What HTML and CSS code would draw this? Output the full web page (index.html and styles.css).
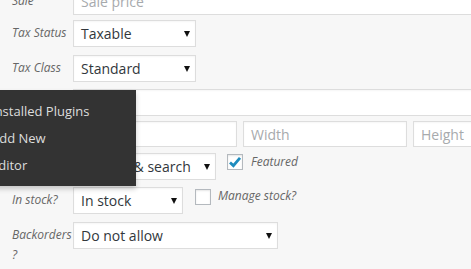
FILE: index.html
```html
<!DOCTYPE html>
<html>
<head>
    <title>Product data</title>
    <link rel="stylesheet" href="styles.css">
</head>
<body>
    <div class="panel">
        <div class="row sp5">
            <label class="field-label">Sale</label>
            <div class="input wide placeholder">Sale price</div>
        </div>
        <div class="row sp8">
            <label class="field-label">Tax Status</label>
            <div class="select tax">Taxable<span class="arrow"></span></div>
        </div>
        <div class="row sp7">
            <label class="field-label">Tax Class</label>
            <div class="select tax">Standard<span class="arrow"></span></div>
        </div>
        <div class="row sp5">
            <label class="field-label">Weight</label>
            <div class="input wide"></div>
        </div>
        <div class="row sp6">
            <label class="field-label">Dimensions</label>
            <div class="dims">
                <div class="input dim placeholder">Length</div>
                <div class="input dim placeholder">Width</div>
                <div class="input dim placeholder">Height</div>
            </div>
        </div>
        <div class="row sp7">
            <label class="field-label">Visibility</label>
            <div class="select visibility">Catalog &amp; search<span class="arrow"></span></div>
            <span class="check checked feat">
                <svg width="14" height="14" viewBox="0 0 14 14"><path d="M2 7.4 L5.4 10.6 L12 2.8" fill="none" stroke="#1e8cbe" stroke-width="2.8"/></svg>
            </span>
            <span class="check-label">Featured</span>
        </div>
        <div class="row sp8">
            <label class="field-label">In stock?</label>
            <div class="select stock">In stock<span class="arrow"></span></div>
            <span class="check manage"></span>
            <span class="check-label">Manage stock?</span>
        </div>
        <div class="row">
            <label class="field-label">Backorders ?</label>
            <div class="select backorders">Do not allow<span class="arrow"></span></div>
        </div>
    </div>

    <!-- flyout submenu from the admin sidebar -->
    <ul class="flyout">
        <li>Installed Plugins</li>
        <li>Add New</li>
        <li>Editor</li>
    </ul>
</body>
</html>
```

FILE: styles.css
```css
html, body {
    margin: 0;
    height: 100%;
    overflow: hidden;
}

body {
    background: #f7f7f7;
    font-family: "Open Sans", "DejaVu Sans", sans-serif;
    color: #32373c;
    position: relative;
}

.panel {
    margin-top: -12px;
    padding-left: 12px;
}

.row {
    display: flex;
    align-items: flex-start;
}

.sp5 { margin-bottom: 5px; }
.sp6 { margin-bottom: 6px; }
.sp7 { margin-bottom: 7px; }
.sp8 { margin-bottom: 8px; }

.field-label {
    flex: none;
    width: 61px;
    padding-top: 3px;
    font-size: 12px;
    font-style: italic;
    line-height: 20px;
    color: #666;
}

.input, .select {
    flex: none;
    box-sizing: border-box;
    height: 27px;
    background: #fff;
    border: 1px solid #ddd;
    box-shadow: inset 0 1px 2px rgba(0, 0, 0, 0.04);
    font-size: 14px;
    line-height: 25px;
    padding-left: 7px;
    white-space: nowrap;
    overflow: hidden;
}

.placeholder {
    color: #a7aaad;
}

.wide {
    width: 420px;
}

.dims {
    display: flex;
    gap: 6px;
}

.dim {
    width: 164px;
    height: 26px;
}

.select {
    position: relative;
    padding-right: 20px;
}

.arrow {
    position: absolute;
    right: 5px;
    top: 10px;
    width: 0;
    height: 0;
    border-left: 3px solid transparent;
    border-right: 3px solid transparent;
    border-top: 6px solid #111;
}

.tax { width: 123px; }
.visibility { width: 143px; }
.stock { width: 110px; }
.backorders { width: 205px; }

.check {
    flex: none;
    box-sizing: border-box;
    width: 16px;
    height: 16px;
    background: #fff;
    border: 1px solid #b4b9be;
    box-shadow: inset 0 1px 2px rgba(0, 0, 0, 0.1);
    display: flex;
    align-items: center;
    justify-content: center;
}

.feat {
    margin: 1px 8px 0 11px;
}

.manage {
    margin: 2px 7px 0 12px;
}

.check-label {
    font-size: 12px;
    font-style: italic;
    color: #666;
    line-height: 18px;
}

.flyout {
    position: absolute;
    left: -22px;
    top: 90px;
    width: 158px;
    box-sizing: border-box;
    margin: 0;
    padding: 8px 0 7px 13px;
    list-style: none;
    background: #333;
    box-shadow: 0 3px 5px rgba(0, 0, 0, 0.2);
}

.flyout li {
    height: 27px;
    line-height: 27px;
    font-size: 13px;
    color: #ddd;
}
```
